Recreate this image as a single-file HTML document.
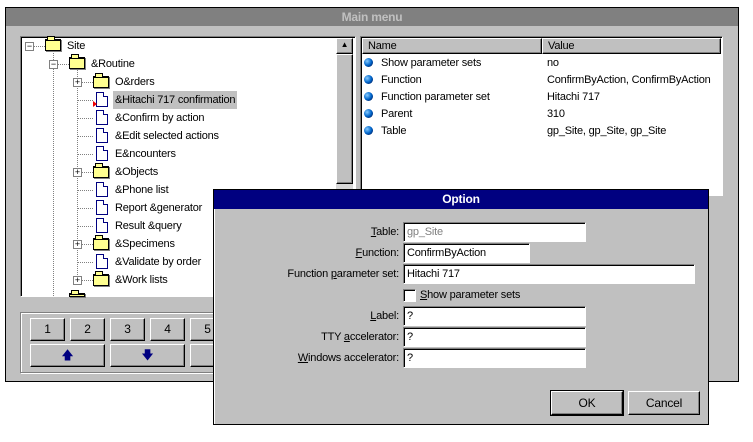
<!DOCTYPE html>
<html><head><style>
*{margin:0;padding:0;box-sizing:border-box}
body{width:753px;height:442px;background:#fff;position:relative;overflow:hidden;font-family:"Liberation Sans",sans-serif;font-size:11px;letter-spacing:-0.2px;color:#000}
.a{position:absolute}
.t{position:absolute;white-space:nowrap;line-height:14px}
.sunk{border-top:1px solid #808080;border-left:1px solid #808080;border-right:1px solid #fff;border-bottom:1px solid #fff;box-shadow:inset 1px 1px 0 #000}
.btn{position:absolute;background:#c0c0c0;border-top:1px solid #fff;border-left:1px solid #fff;border-right:1px solid #000;border-bottom:1px solid #000;box-shadow:inset -1px -1px 0 #808080;text-align:center;line-height:20px;font-size:12px}
.box{position:absolute;width:9px;height:9px;border:1px solid #808080;background:#fff;font-size:9px;line-height:7px;text-align:center;letter-spacing:0}
.hl{position:absolute;height:0;border-top:1px dotted #808080}
.vl{position:absolute;width:0;border-left:1px dotted #808080}
.fold{position:absolute;width:16px;height:12px;background:#ffff90;border:1px solid #000;border-top-width:2px;box-shadow:1px 1px 0 #808080}
.fold:before{content:"";position:absolute;left:1px;top:-5px;width:6px;height:3px;background:#ffff90;border:1px solid #000;border-bottom:none}
.doc{position:absolute;width:12px;height:15px;border:1px solid #000080;background:#fff}
.doc:after{content:"";position:absolute;right:-1px;top:-1px;width:4px;height:4px;background:#fff;border-left:1px solid #000080;border-bottom:1px solid #000080}
.bul{position:absolute;width:9px;height:9px;border-radius:50%;background:radial-gradient(circle at 35% 35%,#8cf,#06c 50%,#003 100%)}
.inp{position:absolute;background:#fff;border-top:1px solid #808080;border-left:1px solid #808080;border-right:1px solid #fff;border-bottom:1px solid #fff;box-shadow:inset 1px 1px 0 #000;padding-left:3px;line-height:18px}
.lab{position:absolute;right:354px;white-space:nowrap;line-height:20px}
u{text-decoration:underline}
</style></head><body>
<div class="a" style="left:5px;top:7px;width:734px;height:375px;background:#c0c0c0;border:1px solid #000"></div>
<div class="a" style="left:6px;top:8px;width:732px;height:18px;background:#808080;color:#c0c0c0;font-weight:bold;text-align:center;line-height:18px;font-size:12px">Main menu</div>
<div class="a sunk" style="left:20px;top:36px;width:336px;height:261px;background:#fff;overflow:hidden"></div>
<div class="a" style="left:336px;top:38px;width:17px;height:257px;background:#d8d8d8"></div>
<div class="btn" style="left:336px;top:38px;width:17px;height:16px;line-height:12px;font-size:8px">▲</div>
<div class="btn" style="left:336px;top:54px;width:17px;height:130px"></div>

<div class="vl" style="left:53px;top:50px;height:246px"></div>
<div class="vl" style="left:77px;top:68px;height:213px"></div>
<div class="box" style="left:25px;top:42px">−</div><div class="hl" style="left:34px;top:46px;width:11px"></div>
<div class="fold" style="left:45px;top:39px"></div><div class="t" style="left:67px;top:39px">Site</div>
<div class="box" style="left:49px;top:60px">−</div><div class="hl" style="left:58px;top:64px;width:11px"></div>
<div class="fold" style="left:69px;top:57px"></div><div class="t" style="left:91px;top:57px">&amp;Routine</div>

<div class="box" style="left:73px;top:78px">+</div><div class="hl" style="left:82px;top:82px;width:11px"></div>
<div class="fold" style="left:93px;top:76px"></div><div class="t" style="left:115px;top:75px">O&amp;rders</div>

<div class="hl" style="left:78px;top:100px;width:15px"></div><div class="doc" style="left:96px;top:92px"></div>
<div class="a" style="left:93px;top:101px;width:0;height:0;border-left:4px solid #e00;border-top:3px solid transparent;border-bottom:3px solid transparent"></div>
<div class="a" style="left:113px;top:91px;width:124px;height:18px;background:#c0c0c0"></div>
<div class="t" style="left:115px;top:93px">&amp;Hitachi 717 confirmation</div>

<div class="hl" style="left:78px;top:118px;width:15px"></div><div class="doc" style="left:96px;top:110px"></div><div class="t" style="left:115px;top:111px">&amp;Confirm by action</div>
<div class="hl" style="left:78px;top:136px;width:15px"></div><div class="doc" style="left:96px;top:128px"></div><div class="t" style="left:115px;top:129px">&amp;Edit selected actions</div>
<div class="hl" style="left:78px;top:154px;width:15px"></div><div class="doc" style="left:96px;top:146px"></div><div class="t" style="left:115px;top:147px">E&amp;ncounters</div>
<div class="box" style="left:73px;top:168px">+</div><div class="hl" style="left:82px;top:172px;width:11px"></div><div class="fold" style="left:93px;top:166px"></div><div class="t" style="left:115px;top:165px">&amp;Objects</div>
<div class="hl" style="left:78px;top:190px;width:15px"></div><div class="doc" style="left:96px;top:182px"></div><div class="t" style="left:115px;top:183px">&amp;Phone list</div>
<div class="hl" style="left:78px;top:208px;width:15px"></div><div class="doc" style="left:96px;top:200px"></div><div class="t" style="left:115px;top:201px">Report &amp;generator</div>
<div class="hl" style="left:78px;top:226px;width:15px"></div><div class="doc" style="left:96px;top:218px"></div><div class="t" style="left:115px;top:219px">Result &amp;query</div>
<div class="box" style="left:73px;top:240px">+</div><div class="hl" style="left:82px;top:244px;width:11px"></div><div class="fold" style="left:93px;top:238px"></div><div class="t" style="left:115px;top:237px">&amp;Specimens</div>
<div class="hl" style="left:78px;top:262px;width:15px"></div><div class="doc" style="left:96px;top:254px"></div><div class="t" style="left:115px;top:255px">&amp;Validate by order</div>
<div class="box" style="left:73px;top:276px">+</div><div class="hl" style="left:82px;top:280px;width:11px"></div><div class="fold" style="left:93px;top:274px"></div><div class="t" style="left:115px;top:273px">&amp;Work lists</div>
<div class="fold" style="left:69px;top:293px;height:4px"></div>

<div class="a sunk" style="left:360px;top:36px;width:363px;height:160px;background:#fff"></div>
<div class="btn" style="left:362px;top:38px;width:180px;height:16px;line-height:14px;text-align:left;padding-left:5px;font-size:11px">Name</div>
<div class="btn" style="left:542px;top:38px;width:179px;height:16px;line-height:14px;text-align:left;padding-left:5px;font-size:11px">Value</div>
<div class="bul" style="left:364px;top:58px"></div><div class="t" style="left:381px;top:56px">Show parameter sets</div><div class="t" style="left:547px;top:56px">no</div>
<div class="bul" style="left:364px;top:75px"></div><div class="t" style="left:381px;top:73px">Function</div><div class="t" style="left:547px;top:73px">ConfirmByAction, ConfirmByAction</div>
<div class="bul" style="left:364px;top:92px"></div><div class="t" style="left:381px;top:90px">Function parameter set</div><div class="t" style="left:547px;top:90px">Hitachi 717</div>
<div class="bul" style="left:364px;top:109px"></div><div class="t" style="left:381px;top:107px">Parent</div><div class="t" style="left:547px;top:107px">310</div>
<div class="bul" style="left:364px;top:126px"></div><div class="t" style="left:381px;top:124px">Table</div><div class="t" style="left:547px;top:124px">gp_Site, gp_Site, gp_Site</div>

<div class="a" style="left:20px;top:312px;width:300px;height:61px;border:1px solid #808080;box-shadow:1px 1px 0 #fff,inset 1px 1px 0 #fff"></div>
<div class="btn" style="left:30px;top:318px;width:35px;height:23px">1</div>
<div class="btn" style="left:70px;top:318px;width:35px;height:23px">2</div>
<div class="btn" style="left:110px;top:318px;width:35px;height:23px">3</div>
<div class="btn" style="left:150px;top:318px;width:35px;height:23px">4</div>
<div class="btn" style="left:190px;top:318px;width:35px;height:23px">5</div>
<div class="btn" style="left:30px;top:344px;width:75px;height:23px;color:#000080">🡅</div>
<div class="btn" style="left:110px;top:344px;width:75px;height:23px;color:#000080">🡇</div>
<div class="btn" style="left:190px;top:344px;width:75px;height:23px"></div>

<div class="a" style="left:213px;top:189px;width:496px;height:236px;background:#c0c0c0;border:1px solid #000;box-shadow:inset 1px 1px 0 #fff"></div>
<div class="a" style="left:214px;top:190px;width:494px;height:19px;background:#000080;color:#fff;font-weight:bold;text-align:center;line-height:19px;font-size:12px">Option</div>
<div class="lab" style="top:222px"><u>T</u>able:</div><div class="inp" style="left:403px;top:222px;width:183px;height:20px;color:#808080">gp_Site</div>
<div class="lab" style="top:243px"><u>F</u>unction:</div><div class="inp" style="left:403px;top:243px;width:127px;height:20px">ConfirmByAction</div>
<div class="lab" style="top:264px">Function <u>p</u>arameter set:</div><div class="inp" style="left:403px;top:264px;width:292px;height:20px">Hitachi 717</div>
<div class="a" style="left:403px;top:289px;width:13px;height:13px;background:#fff;border-top:1px solid #808080;border-left:1px solid #808080;border-right:1px solid #fff;border-bottom:1px solid #fff;box-shadow:inset 1px 1px 0 #000"></div>
<div class="t" style="left:420px;top:288px"><u>S</u>how parameter sets</div>
<div class="lab" style="top:306px"><u>L</u>abel:</div><div class="inp" style="left:403px;top:306px;width:183px;height:20px">?</div>
<div class="lab" style="top:327px">TTY <u>a</u>ccelerator:</div><div class="inp" style="left:403px;top:327px;width:183px;height:20px">?</div>
<div class="lab" style="top:348px"><u>W</u>indows accelerator:</div><div class="inp" style="left:403px;top:348px;width:183px;height:20px">?</div>
<div class="btn" style="left:551px;top:391px;width:72px;height:24px;outline:1px solid #000;line-height:22px">OK</div>
<div class="btn" style="left:628px;top:391px;width:72px;height:24px;line-height:22px">Cancel</div>
</body></html>
